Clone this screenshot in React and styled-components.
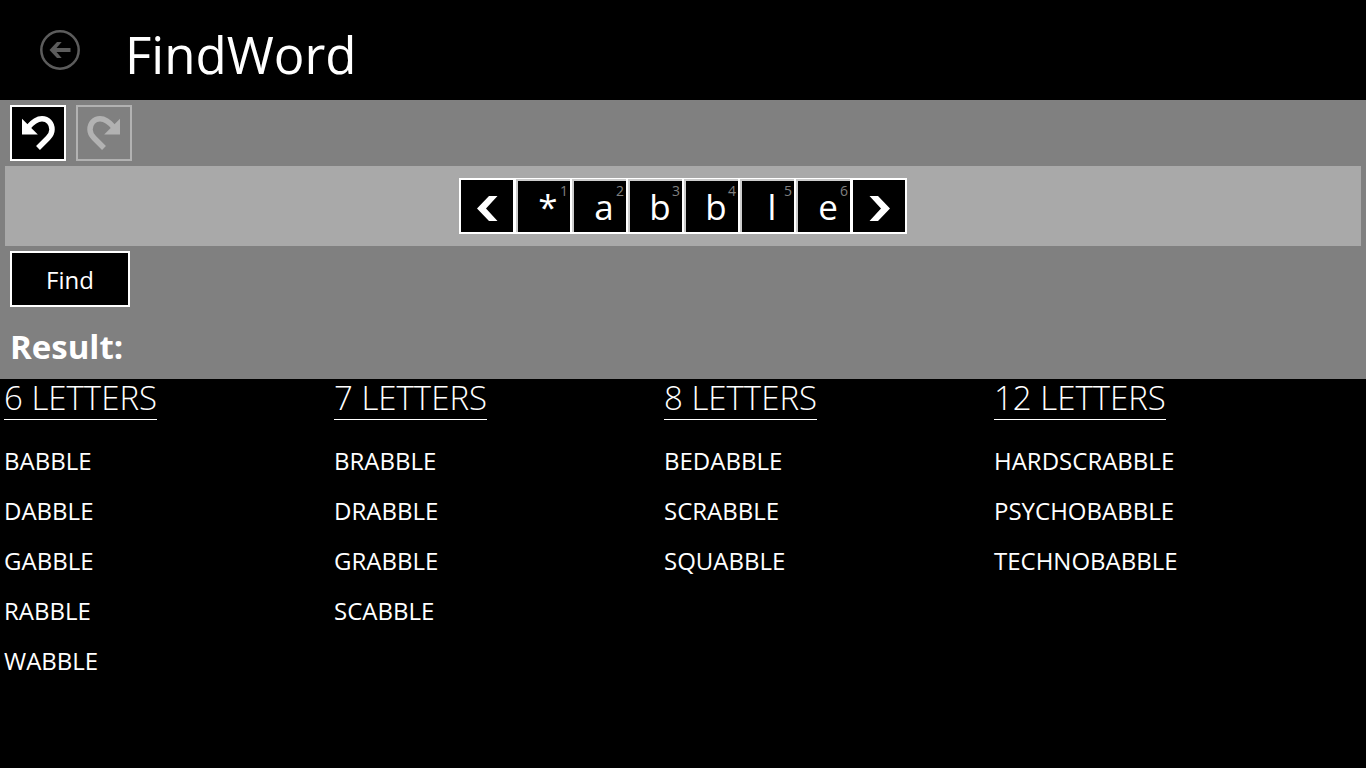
import React, { useState } from "react";
import styled, { createGlobalStyle } from "styled-components";

const GlobalStyle = createGlobalStyle`
  *, *::before, *::after { box-sizing: border-box; }
  html, body { margin: 0; background: #000; }
  body {
    color: #fff;
    font-family: "Segoe UI", "Open Sans", "Noto Sans", sans-serif;
  }
  h1, h2, h3, ul { margin: 0; padding: 0; }
  button, input { font-family: inherit; }
`;

const Page = styled.div`
  min-height: 100vh;
  background: #000;
`;

const Header = styled.header`
  display: flex;
  align-items: center;
  gap: 45px;
  height: 100px;
  padding: 0 40px;
`;

const BackButton = styled.button`
  display: block;
  width: 40px;
  height: 40px;
  padding: 0;
  border: 0;
  background: none;
  color: #5c5c5c;

  svg { display: block; }
`;

const Title = styled.h1`
  padding-top: 8px;
  font-size: 51px;
  font-weight: 400;
  line-height: 60px;
`;

const Panel = styled.section`
  display: flex;
  flex-direction: column;
  padding: 5px;
  background: #808080;
`;

const Toolbar = styled.div`
  display: flex;
  gap: 10px;
  padding: 0 5px 5px;
`;

const SquareButton = styled.button`
  display: flex;
  align-items: center;
  justify-content: center;
  width: 56px;
  height: 56px;
  padding: 0;
  border: 2px solid #fff;
  background: #000;
  color: #fff;

  &:disabled {
    border-color: #b2b2b2;
    background: transparent;
    color: #b2b2b2;
  }
`;

const LetterStrip = styled.div`
  display: flex;
  align-items: center;
  justify-content: center;
  height: 80px;
  background: #a9a9a9;
`;

const Tile = styled.label`
  position: relative;
  width: 56px;
  height: 56px;
  border: 1px solid #fff;
  border-bottom-width: 2px;
  background: #000;
`;

const TileNumber = styled.span`
  position: absolute;
  top: 3px;
  right: 2px;
  color: #808080;
  font-size: 14px;
  line-height: 18px;
`;

const TileInput = styled.input`
  display: block;
  width: 100%;
  height: 100%;
  padding: 0 0 0 8px;
  border: 0 solid #ccc;
  border-width: 2px 0 0 2px;
  outline: 0;
  background: transparent;
  color: #fff;
  font-size: 35px;
  text-align: center;
`;

const FindButton = styled.button`
  width: 120px;
  height: 56px;
  margin: 5px;
  padding: 0;
  border: 2px solid #fff;
  background: #000;
  color: #fff;
  font-size: 24px;
`;

const ResultTitle = styled.h2`
  margin-top: 8px;
  padding: 0 5px;
  font-size: 33px;
  font-weight: 700;
  line-height: 54px;
`;

const Results = styled.main`
  display: grid;
  grid-template-columns: repeat(auto-fill, 330px);
  padding: 0 4px;
`;

const GroupTitle = styled.h3`
  width: fit-content;
  margin-bottom: 16px;
  padding-bottom: 2px;
  border-bottom: 1px solid #fff;
  font-size: 33px;
  font-weight: 300;
  line-height: 38px;
`;

const WordList = styled.ul`
  list-style: none;
`;

const Word = styled.li`
  font-size: 24px;
  line-height: 50px;
`;

const BackIcon = () => (
  <svg width="40" height="40" viewBox="0 0 40 40" fill="none" aria-hidden="true">
    <circle cx="20" cy="20" r="18.7" stroke="currentColor" strokeWidth="2.5" />
    <path d="M9.5 20 17 12H21.700L16.500 18H30.500V22H16.500L21.700 28H17Z" fill="currentColor" />
  </svg>
);

const UndoIcon = ({ flip }) => (
  <svg width="52" height="52" viewBox="0 0 52 52" fill="none" aria-hidden="true">
    <g transform={flip ? "matrix(-1 0 0 1 52 0)" : undefined}>
      <path d="M10 11.700V27.500H25.800Z" fill="currentColor" />
      <path
        d="M16 20.500C21 14.500 25 11.800 30 11.800C36 11.800 40 16.500 40 22.500C40 26.500 38 29 36 31L26 41"
        stroke="currentColor"
        strokeWidth="5.500"
      />
    </g>
  </svg>
);

const ChevronIcon = ({ flip }) => (
  <svg width="52" height="52" viewBox="0 0 52 52" aria-hidden="true">
    <path
      transform={flip ? "matrix(-1 0 0 1 53 0)" : undefined}
      d="M16 28.500 28 16H36.500L25 28.500 36.500 41H28Z"
      fill="currentColor"
    />
  </svg>
);

const groups = [
  { size: 6, words: ["BABBLE", "DABBLE", "GABBLE", "RABBLE", "WABBLE"] },
  { size: 7, words: ["BRABBLE", "DRABBLE", "GRABBLE", "SCABBLE"] },
  { size: 8, words: ["BEDABBLE", "SCRABBLE", "SQUABBLE"] },
  { size: 12, words: ["HARDSCRABBLE", "PSYCHOBABBLE", "TECHNOBABBLE"] },
];

export default function App() {
  const [letters, setLetters] = useState(["*", "a", "b", "b", "l", "e"]);
  const setLetter = (index, value) =>
    setLetters(letters.map((letter, i) => (i === index ? value : letter)));

  return (
    <Page>
      <GlobalStyle />
      <Header>
        <BackButton aria-label="Back"><BackIcon /></BackButton>
        <Title>FindWord</Title>
      </Header>
      <Panel>
        <Toolbar>
          <SquareButton aria-label="Undo"><UndoIcon /></SquareButton>
          <SquareButton aria-label="Redo" disabled><UndoIcon flip /></SquareButton>
        </Toolbar>
        <LetterStrip>
          <SquareButton aria-label="Remove letter"><ChevronIcon /></SquareButton>
          {letters.map((letter, i) => (
            <Tile key={i}>
              <TileNumber>{i + 1}</TileNumber>
              <TileInput
                maxLength={1}
                value={letter}
                onChange={(e) => setLetter(i, e.target.value)}
              />
            </Tile>
          ))}
          <SquareButton aria-label="Add letter"><ChevronIcon flip /></SquareButton>
        </LetterStrip>
        <FindButton>Find</FindButton>
        <ResultTitle>Result:</ResultTitle>
      </Panel>
      <Results>
        {groups.map((group) => (
          <section key={group.size}>
            <GroupTitle>{group.size} LETTERS</GroupTitle>
            <WordList>
              {group.words.map((word) => (
                <Word key={word}>{word}</Word>
              ))}
            </WordList>
          </section>
        ))}
      </Results>
    </Page>
  );
}
